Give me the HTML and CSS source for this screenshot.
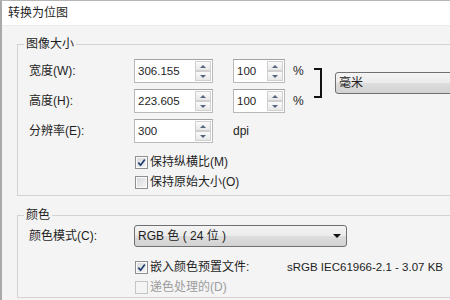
FILE: index.html
```html
<!DOCTYPE html>
<html lang="zh-CN">
<head>
<meta charset="utf-8">
<link rel="stylesheet" href="styles.css">
</head>
<body>
<div class="window">
  <div class="titlebar">转换为位图</div>
  <div class="content">
    <fieldset class="group group-size">
      <legend>图像大小</legend>
      <div class="size-grid">
        <label class="lbl row1">宽度(W):</label>
        <div class="spin row1 col2"><span class="val">306.155</span><span class="btns"><i class="up"></i><i class="down"></i></span></div>
        <div class="spin pct row1 col3"><span class="val">100</span><span class="btns"><i class="up"></i><i class="down"></i></span></div>
        <span class="unit row1 col4">%</span>

        <label class="lbl row2">高度(H):</label>
        <div class="spin row2 col2"><span class="val">223.605</span><span class="btns"><i class="up"></i><i class="down"></i></span></div>
        <div class="spin pct row2 col3"><span class="val">100</span><span class="btns"><i class="up"></i><i class="down"></i></span></div>
        <span class="unit row2 col4">%</span>

        <div class="bracket"></div>
        <div class="select units"><span>毫米</span></div>

        <label class="lbl row3">分辨率(E):</label>
        <div class="spin row3 col2"><span class="val">300</span><span class="btns"><i class="up"></i><i class="down"></i></span></div>
        <span class="dpi row3 col3">dpi</span>
      </div>
      <div class="checks">
        <div class="check"><span class="box"><svg width="9" height="9" viewBox="0 0 9 9"><path d="M1.3 4.6 L3.6 7.2 L7.8 1.4" fill="none" stroke="#233d72" stroke-width="1.7"/></svg></span><span>保持纵横比(M)</span></div>
        <div class="check"><span class="box"></span><span>保持原始大小(O)</span></div>
      </div>
    </fieldset>

    <fieldset class="group group-color">
      <legend>颜色</legend>
      <div class="mode-row">
        <label class="lbl mode-lbl">颜色模式(C):</label>
        <div class="select mode"><span>RGB 色 ( 24 位 )</span><span class="arrow"></span></div>
      </div>
      <div class="checks checks-color">
        <div class="check"><span class="box"><svg width="9" height="9" viewBox="0 0 9 9"><path d="M1.3 4.6 L3.6 7.2 L7.8 1.4" fill="none" stroke="#233d72" stroke-width="1.7"/></svg></span><span class="embed">嵌入颜色预置文件:</span><span class="profile">sRGB IEC61966-2.1 - 3.07 KB</span></div>
        <div class="check disabled"><span class="box"></span><span>递色处理的(D)</span></div>
      </div>
    </fieldset>
  </div>
</div>
</body>
</html>
```

FILE: styles.css
```css
* { box-sizing: border-box; }
html, body { margin: 0; padding: 0; }
body {
  width: 450px;
  height: 300px;
  overflow: hidden;
  background: #f4f4f4;
  font-family: "Liberation Sans", "Noto Sans CJK SC", sans-serif;
  font-size: 12px;
  color: #1e1e1e;
}
.window {
  height: 300px;
  overflow: hidden;
  border-left: 2px solid #a9a9a9;
  border-top: 1px solid #b5b5b5;
  background: #f4f4f4;
}
.titlebar {
  height: 25px;
  line-height: 24px;
  padding-left: 6px;
  background: #fff;
  border-bottom: 1px solid #ececec;
}
.content { padding: 10px 0 0 15px; overflow: hidden; }
.group {
  margin: 0;
  min-width: 0;
  border: 1px solid #d3d3d3;
  border-right: none;
  padding: 7px 0 3px 11px;
}
.group legend {
  margin-left: -5px;
  padding: 0 2px;
  line-height: 16px;
}
.group-color { margin-top: 11px; padding-top: 2px; padding-bottom: 0; }

.size-grid {
  display: grid;
  grid-template-columns: 105px 99px 60px 21px 20px 1fr;
  grid-template-rows: 24px 24px 24px;
  row-gap: 6px;
  align-items: center;
}
.row1 { grid-row: 1; }
.row2 { grid-row: 2; }
.row3 { grid-row: 3; }
.col2 { grid-column: 2; }
.col3 { grid-column: 3; }
.col4 { grid-column: 4; }
.lbl { grid-column: 1; line-height: 16px; }

.spin {
  width: 79px;
  height: 24px;
  display: flex;
  background: #fff;
  border: 1px solid #b9b9b9;
  border-top-color: #a3a3a3;
}
.spin.pct { width: 52px; }
.spin .val {
  flex: 1;
  padding-left: 3px;
  display: flex;
  align-items: center;
  font-size: 11.5px;
}
.btns {
  width: 16px;
  margin: 1px;
  display: flex;
  flex-direction: column;
}
.btns i {
  flex: 1;
  border: 1px solid #d0d0d0;
  background: linear-gradient(#fbfbfb, #e8e8e8);
  display: flex;
  align-items: center;
  justify-content: center;
}
.btns i::before {
  content: "";
  border-left: 3px solid transparent;
  border-right: 3px solid transparent;
}
.btns .up::before { border-bottom: 3px solid #56657e; }
.btns .down::before { border-top: 3px solid #56657e; }

.unit, .dpi { line-height: 16px; }

.bracket {
  grid-row: 1 / 3;
  grid-column: 5;
  align-self: start;
  margin-top: 9px;
  width: 8px;
  height: 30px;
  border: 2px solid #111;
  border-left: none;
}

.select {
  height: 22px;
  border: 1px solid #707070;
  border-radius: 3px;
  background: linear-gradient(#f4f4f4 0%, #ebebeb 50%, #dddddd 51%, #d2d2d2 100%);
  display: flex;
  align-items: center;
  padding-left: 3px;
  line-height: 16px;
}
.units {
  grid-row: 1 / 3;
  grid-column: 6;
  align-self: start;
  margin-top: 13px;
  margin-left: 1px;
  width: 200px;
}

.checks { margin-top: 9px; padding-left: 106px; }
.check {
  height: 20px;
  display: flex;
  align-items: center;
  line-height: 16px;
}
.box {
  width: 13px;
  height: 13px;
  margin-right: 2px;
  border: 1px solid #8f8f8f;
  background: linear-gradient(135deg, #d6d8db, #f6f6f6);
  box-shadow: inset 0 0 0 1px #fbfbfb;
  display: flex;
  align-items: center;
  justify-content: center;
}
.embed { width: 137px; }
.profile { font-size: 11.5px; }
.check.disabled { color: #9d9d9d; }
.check.disabled .box {
  border-color: #c6c6c6;
  background: #f4f4f4;
  box-shadow: none;
}

.mode-row { display: flex; align-items: center; height: 22px; }
.mode-lbl { width: 105px; }
.mode {
  width: 213px;
  justify-content: space-between;
}
.arrow {
  margin-right: 5px;
  border-left: 4px solid transparent;
  border-right: 4px solid transparent;
  border-top: 4px solid #111;
}
.checks-color { margin-top: 10px; }
```
